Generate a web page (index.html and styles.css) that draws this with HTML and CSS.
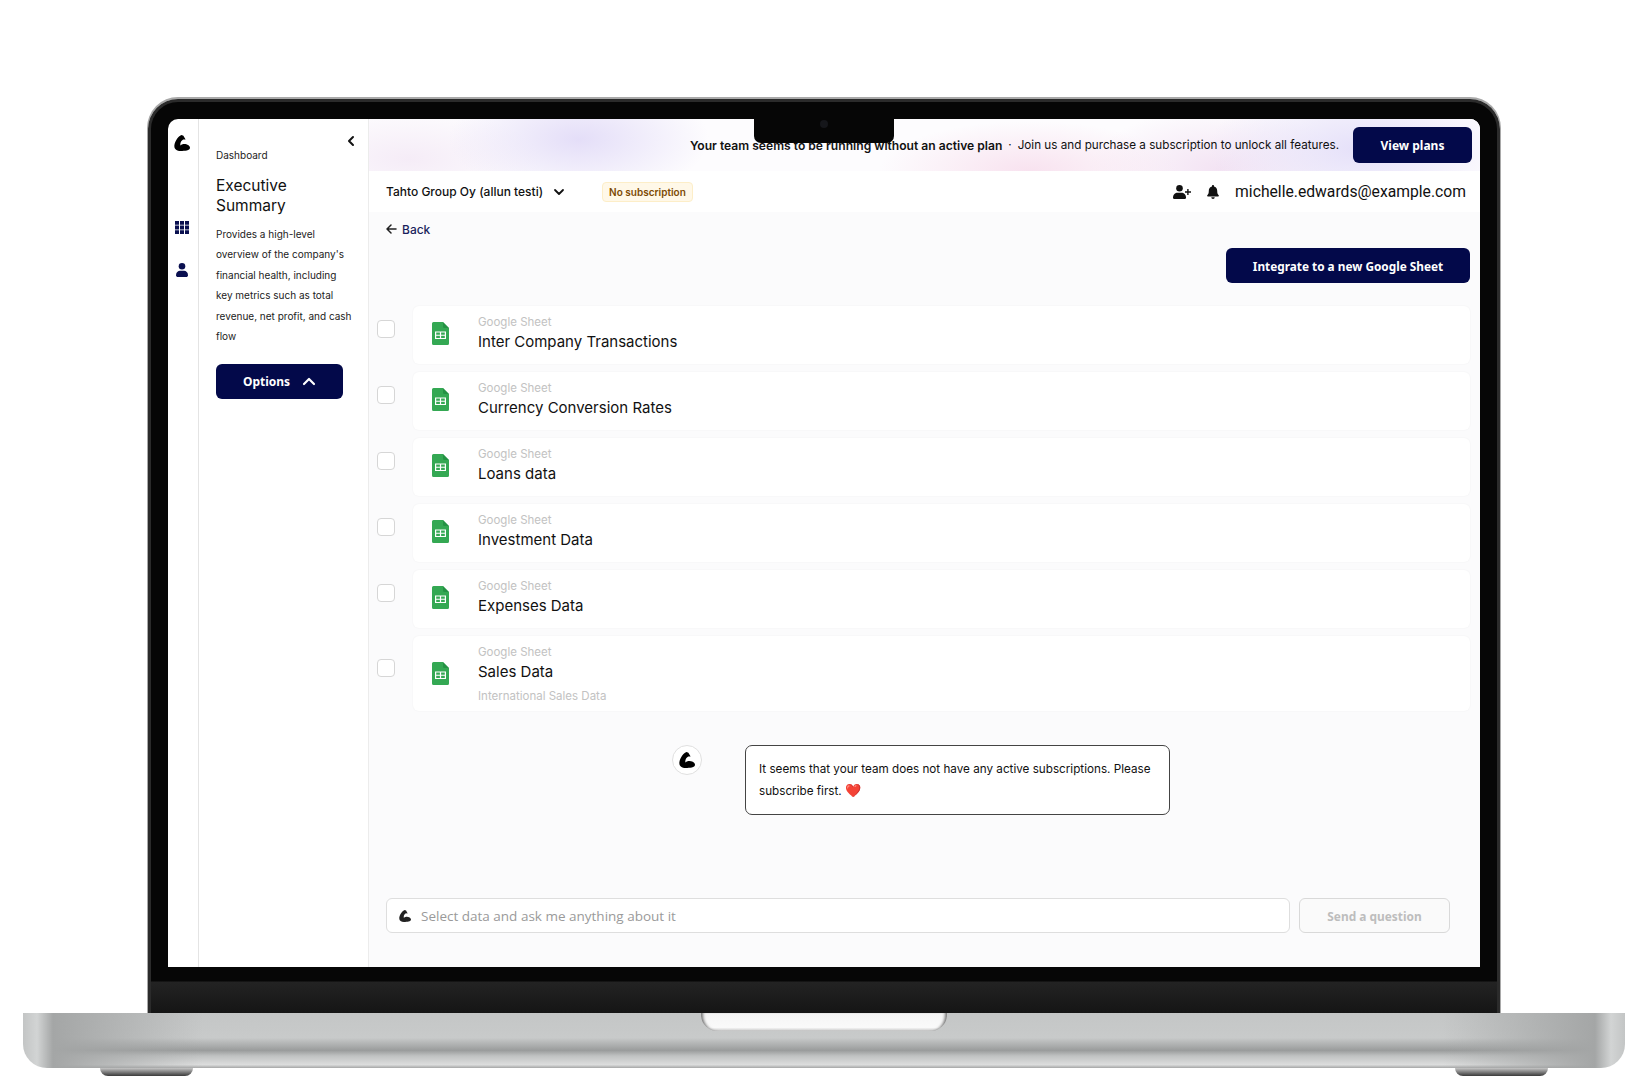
FILE: index.html
```html
<!DOCTYPE html>
<html lang="en">
<head>
    <meta charset="UTF-8">
    <meta name="viewport" content="width=device-width, initial-scale=1.0">
    <title>Executive Summary</title>
    <link rel="stylesheet" href="styles.css">
</head>
<body>
    <svg class="icon-defs" width="0" height="0">
        <symbol id="logo" viewBox="0 0 16 16">
            <path d="M7.6 0C4.6 1 1.4 5.4.5 9.4-.4 13.6 2.400 16 6.600 16c4.200 0 9.400-.4 9.400-3.200 0-2.400-3.400-4.200-6.600-3.800-1.200.2-2.200.8-3 1.400-.4-2.600.6-4.800 2.800-6l2.400.2L9.400.8z"/>
        </symbol>
        <symbol id="sheet" viewBox="0 0 17 23">
            <path fill="#34a853" d="M1.500 0H11l6 6v15.500a1.500 1.500 0 0 1-1.500 1.500h-14A1.500 1.500 0 0 1 0 21.500v-20A1.500 1.500 0 0 1 1.500 0z"/>
            <path fill="#188038" d="M11 0l6 6h-4.500A1.500 1.500 0 0 1 11 4.500z" opacity=".55"/>
            <path fill="#fff" d="M3 9.500h11v7.500H3zm1.200 1.100v2.100h3.700v-2.100zm4.900 0v2.100h3.700v-2.100zm-4.900 3.200v2.100h3.700v-2.100zm4.900 0v2.100h3.700v-2.100z" fill-rule="evenodd"/>
        </symbol>
    </svg>

    <div class="lid">
        <div class="notch"><span class="camera"></span></div>
        <div class="screen">
            <nav class="rail">
                <svg class="rail-logo"><use href="#logo"/></svg>
                <svg class="rail-icon" viewBox="0 0 14 13" fill="#0a1050">
                    <path d="M0 0h4v3.800H0zm5 0h4v3.800H5zm5 0h4v3.800h-4zM0 4.600h4v3.800H0zm5 0h4v3.800H5zm5 0h4v3.800h-4zM0 9.200h4V13H0zm5 0h4V13H5zm5 0h4V13h-4z"/>
                </svg>
                <svg class="rail-icon rail-user" viewBox="0 0 12 14" fill="#0a1050">
                    <circle cx="6" cy="3.300" r="3.300"/>
                    <path d="M0 12.200C0 9.500 2 7.800 4 7.800h4c2 0 4 1.700 4 4.400 0 1.200-.8 1.800-2 1.800H2c-1.200 0-2-.6-2-1.800z"/>
                </svg>
            </nav>

            <aside class="panel">
                <svg class="collapse" viewBox="0 0 8 12" fill="none" stroke="#111" stroke-width="2" stroke-linecap="round" stroke-linejoin="round"><path d="M6 2L2 6l4 4"/></svg>
                <div class="crumb">Dashboard</div>
                <h2>Executive Summary</h2>
                <p>Provides a high-level overview of the company's financial health, including key metrics such as total revenue, net profit, and cash flow</p>
                <button class="btn options-btn">Options
                    <svg viewBox="0 0 14 9" fill="none" stroke="#fff" stroke-width="2.200" stroke-linecap="round" stroke-linejoin="round"><path d="M2 7l5-5 5 5"/></svg>
                </button>
            </aside>

            <main class="main">
                <div class="banner">
                    <b>Your team seems to be running without an active plan</b>
                    <span class="dot">·</span>
                    <span>Join us and purchase a subscription to unlock all features.</span>
                    <button class="btn plans-btn">View plans</button>
                </div>

                <header class="topbar">
                    <span class="team">Tahto Group Oy (allun testi)</span>
                    <svg class="team-caret" viewBox="0 0 12 8" fill="none" stroke="#111" stroke-width="1.800" stroke-linecap="round" stroke-linejoin="round"><path d="M2 2l4 4 4-4"/></svg>
                    <span class="badge">No subscription</span>
                    <svg class="add-user" viewBox="0 0 18 14" fill="#111">
                        <circle cx="6.500" cy="3.300" r="3.300"/>
                        <path d="M0 12.500C0 9.600 2.200 7.800 4.500 7.800h4c2.300 0 4.500 1.800 4.500 4.700 0 1-.7 1.500-1.700 1.500H1.700C.7 14 0 13.500 0 12.500z"/>
                        <path d="M14.200 4h1.400v2.300H18v1.400h-2.400V10h-1.400V7.700H12V6.300h2.200z"/>
                    </svg>
                    <svg class="bell" viewBox="0 0 12 14" fill="#111">
                        <path d="M6 0c.6 0 1 .4 1 1v.6c2 .5 3.200 2.200 3.200 4.200 0 2.600.6 3.600 1.500 4.500.4.500.1 1.200-.6 1.200H.9c-.7 0-1-.7-.6-1.200.9-.9 1.500-1.900 1.500-4.500 0-2 1.200-3.700 3.200-4.200V1c0-.6.4-1 1-1z"/>
                        <path d="M4.300 12.300h3.400C7.700 13.300 7 14 6 14s-1.700-.7-1.700-1.700z"/>
                    </svg>
                    <span class="email">michelle.edwards@example.com</span>
                </header>

                <section class="content">
                    <a class="back">
                        <svg viewBox="0 0 11 10" fill="none" stroke="#222" stroke-width="1.500" stroke-linecap="round" stroke-linejoin="round"><path d="M5 1L1 5l4 4M1 5h9"/></svg>
                        Back
                    </a>
                    <div class="actions">
                        <button class="btn integrate-btn">Integrate to a new Google Sheet</button>
                    </div>

                    <div class="sheet-list">
                        <div class="sheet-row">
                            <span class="check"></span>
                            <div class="sheet-card">
                                <svg class="sheet-icon"><use href="#sheet"/></svg>
                                <div>
                                    <div class="sheet-type">Google Sheet</div>
                                    <div class="sheet-name">Inter Company Transactions</div>
                                </div>
                            </div>
                        </div>
                        <div class="sheet-row">
                            <span class="check"></span>
                            <div class="sheet-card">
                                <svg class="sheet-icon"><use href="#sheet"/></svg>
                                <div>
                                    <div class="sheet-type">Google Sheet</div>
                                    <div class="sheet-name">Currency Conversion Rates</div>
                                </div>
                            </div>
                        </div>
                        <div class="sheet-row">
                            <span class="check"></span>
                            <div class="sheet-card">
                                <svg class="sheet-icon"><use href="#sheet"/></svg>
                                <div>
                                    <div class="sheet-type">Google Sheet</div>
                                    <div class="sheet-name">Loans data</div>
                                </div>
                            </div>
                        </div>
                        <div class="sheet-row">
                            <span class="check"></span>
                            <div class="sheet-card">
                                <svg class="sheet-icon"><use href="#sheet"/></svg>
                                <div>
                                    <div class="sheet-type">Google Sheet</div>
                                    <div class="sheet-name">Investment Data</div>
                                </div>
                            </div>
                        </div>
                        <div class="sheet-row">
                            <span class="check"></span>
                            <div class="sheet-card">
                                <svg class="sheet-icon"><use href="#sheet"/></svg>
                                <div>
                                    <div class="sheet-type">Google Sheet</div>
                                    <div class="sheet-name">Expenses Data</div>
                                </div>
                            </div>
                        </div>
                        <div class="sheet-row">
                            <span class="check"></span>
                            <div class="sheet-card tall">
                                <svg class="sheet-icon"><use href="#sheet"/></svg>
                                <div>
                                    <div class="sheet-type">Google Sheet</div>
                                    <div class="sheet-name">Sales Data</div>
                                    <div class="sheet-type sheet-note">International Sales Data</div>
                                </div>
                            </div>
                        </div>
                    </div>

                    <div class="chat">
                        <span class="avatar"><svg><use href="#logo"/></svg></span>
                        <div class="bubble">It seems that your team does not have any active subscriptions. Please subscribe first. <span class="heart">❤️</span></div>
                    </div>

                    <div class="ask">
                        <div class="ask-input">
                            <svg><use href="#logo"/></svg>
                            <span>Select data and ask me anything about it</span>
                        </div>
                        <button class="send-btn">Send a question</button>
                    </div>
                </section>
            </main>
        </div>
    </div>

    <div class="base">
        <span class="hinge"></span>
    </div>
    <div class="feet">
        <span class="foot"></span>
        <span class="foot"></span>
    </div>
</body>
</html>
```

FILE: styles.css
```css
* {
    box-sizing: border-box;
}

body {
    margin: 0;
    padding-top: 99px;
    background-color: #fff;
    font-family: Inter, "Liberation Sans", sans-serif;
    color: #111;
}

.icon-defs {
    position: absolute;
}

button {
    font-family: inherit;
    cursor: pointer;
}

/* Laptop frame */
.lid {
    position: relative;
    width: 1352px;
    height: 914px;
    margin-left: 148px;
    padding: 17px 17px 0;
    background: linear-gradient(#060606 0, #060606 879px, #232323 880px, #151515 100%);
    border: 3px solid #2b2b2b;
    border-bottom: 0;
    border-radius: 30px 30px 0 0;
    box-shadow: 0 -1px 0 1px #a9a9a9;
}

.notch {
    position: absolute;
    top: 14px;
    left: 603px;
    width: 140px;
    height: 27px;
    display: flex;
    justify-content: center;
    padding-top: 4px;
    background-color: #060606;
    border-radius: 0 0 7px 7px;
}

.camera {
    width: 8px;
    height: 8px;
    border-radius: 50%;
    background-color: #15161a;
}

.screen {
    display: flex;
    width: 1312px;
    height: 848px;
    background-color: #fff;
    border-radius: 10px 10px 0 0;
    overflow: hidden;
}

.base {
    position: relative;
    width: 1602px;
    height: 55px;
    margin-left: 23px;
    border-radius: 0 0 24px 24px;
    background:
        linear-gradient(90deg, #c3c5c5 0, #d2d4d4 14px, #a4a6a6 30px, rgba(170, 172, 172, 0) 180px, rgba(170, 172, 172, 0) 1420px, #a4a6a6 1572px, #d2d4d4 1588px, #c3c5c5 100%),
        linear-gradient(#c4c6c6 0, #c8caca 45%, #9a9c9c 68%, #c0c2c2 78%, #dcdddd 94%, #a5a6a6 100%);
}

.hinge {
    position: absolute;
    top: 0;
    left: 678px;
    width: 246px;
    height: 18px;
    background: linear-gradient(#f4f4f4, #fafafa 80%, #c9c9c9);
    border-radius: 0 0 16px 16px;
    box-shadow: inset 4px 0 3px -2px #777, inset -4px 0 3px -2px #777;
}

.feet {
    display: flex;
    justify-content: space-between;
    width: 1448px;
    margin-left: 100px;
}

.foot {
    width: 93px;
    height: 8px;
    background: linear-gradient(#c5c5c5, #3a3a3a);
    border-radius: 0 0 12px 12px;
}

/* Left rail */
.rail {
    flex: 0 0 31px;
    display: flex;
    flex-direction: column;
    align-items: center;
    padding-top: 16px;
    border-right: 1px solid #e4e4e4;
}

.rail-logo {
    width: 16px;
    height: 16px;
    margin-left: -2px;
}

.rail-icon {
    width: 14px;
    height: 13px;
    margin-top: 70px;
    margin-left: -2px;
}

.rail-user {
    width: 12px;
    height: 14px;
    margin-top: 29px;
}

/* Description panel */
.panel {
    position: relative;
    flex: 0 0 170px;
    padding: 29px 15px 0 17px;
    border-right: 1px solid #ececec;
}

.collapse {
    position: absolute;
    top: 16px;
    left: 148px;
    width: 8px;
    height: 12px;
}

.crumb {
    font-size: 10px;
    line-height: 14px;
    color: #222;
}

.panel h2 {
    margin: 14px 0 0;
    font-size: 15.500px;
    font-weight: 400;
    line-height: 20px;
}

.panel p {
    margin: 8px 0 0;
    font-size: 10px;
    line-height: 20.400px;
    color: #222;
}

.btn {
    background-color: #03094a;
    color: #fff;
    border: none;
    border-radius: 6px;
    font-family: "Noto Sans", sans-serif;
    font-weight: 700;
}

.options-btn {
    display: flex;
    align-items: center;
    justify-content: center;
    gap: 12px;
    width: 127px;
    height: 35px;
    margin-top: 18px;
    font-size: 12px;
}

.options-btn svg {
    width: 14px;
    height: 9px;
}

/* Main column */
.main {
    flex: 1;
    min-width: 0;
    display: flex;
    flex-direction: column;
    background-color: #fbfbfc;
}

.banner {
    flex: 0 0 52px;
    display: flex;
    align-items: center;
    justify-content: flex-end;
    padding-right: 8px;
    font-size: 11.700px;
    background:
        radial-gradient(ellipse 130px 60px at 210px 20px, #e4def8, rgba(228, 222, 248, 0) 100%),
        radial-gradient(ellipse 130px 50px at 40px 40px, #f5ecf7, rgba(245, 236, 247, 0) 100%),
        radial-gradient(ellipse 150px 50px at 660px 52px, #f8e2ef, rgba(248, 226, 239, 0) 100%),
        radial-gradient(ellipse 150px 70px at 990px 30px, #e5e0f9, rgba(229, 224, 249, 0) 100%),
        radial-gradient(ellipse 130px 60px at 850px 50px, #f3e3f3, rgba(243, 227, 243, 0) 100%),
        #fdfcfe;
}

.banner b {
    font-size: 12.100px;
    font-weight: 600;
}

.dot {
    margin: 0 6px;
}

.plans-btn {
    width: 119px;
    height: 36px;
    margin-left: 14px;
    font-size: 12px;
}

.topbar {
    flex: 0 0 41px;
    display: flex;
    align-items: center;
    padding: 0 14px 0 17px;
    background-color: #fff;
}

.team {
    font-size: 12px;
    font-weight: 500;
}

.team-caret {
    width: 12px;
    height: 8px;
    margin-left: 10px;
}

.badge {
    margin-left: 37px;
    padding: 0 6px;
    height: 20px;
    line-height: 18px;
    font-size: 10px;
    font-weight: 600;
    color: #7c4a03;
    background-color: #fff8e8;
    border: 1px solid #fdeec8;
    border-radius: 4px;
}

.add-user {
    width: 18px;
    height: 14px;
    margin-left: auto;
}

.bell {
    width: 12px;
    height: 14px;
    margin: 0 16px 0 16px;
}

.email {
    font-family: Roboto, sans-serif;
    font-size: 15.700px;
}

.content {
    flex: 1;
    display: flex;
    flex-direction: column;
    padding: 9px 10px 34px 8px;
}

.back {
    display: flex;
    align-items: center;
    gap: 5px;
    margin-left: 9px;
    height: 16px;
    font-size: 12px;
    font-weight: 500;
    color: #1a1f5c;
}

.back svg {
    width: 11px;
    height: 10px;
}

.actions {
    display: flex;
    justify-content: flex-end;
    margin-top: 11px;
}

.integrate-btn {
    width: 244px;
    height: 35px;
    font-size: 11.800px;
}

/* Sheet list */
.sheet-list {
    display: flex;
    flex-direction: column;
    gap: 8px;
    margin-top: 23px;
}

.sheet-row {
    display: flex;
    align-items: center;
    gap: 18px;
}

.check {
    flex: 0 0 18px;
    height: 18px;
    margin-bottom: 12px;
    background-color: #fff;
    border: 1px solid #d6d6d6;
    border-radius: 4px;
}

.sheet-card {
    flex: 1;
    display: flex;
    align-items: center;
    gap: 29px;
    height: 58px;
    padding: 0 0 3px 19px;
    background-color: #fff;
    border-radius: 6px;
    box-shadow: 0 0 2px rgba(0, 0, 0, 0.05);
}

.sheet-card.tall {
    height: 75px;
    padding-bottom: 0;
}

.sheet-icon {
    flex: 0 0 17px;
    width: 17px;
    height: 23px;
}

.sheet-type {
    font-size: 11.500px;
    line-height: 14px;
    color: #c2c2c2;
}

.sheet-name {
    margin-top: 3px;
    font-size: 15px;
    line-height: 20px;
}

.sheet-note {
    margin-top: 7px;
}

/* Chat */
.chat {
    display: flex;
    align-items: flex-start;
    margin: 34px 0 0 295px;
}

.avatar {
    flex: 0 0 30px;
    height: 30px;
    display: flex;
    align-items: center;
    justify-content: center;
    background-color: #fff;
    border: 1px solid #e0e0e0;
    border-radius: 50%;
}

.avatar svg {
    width: 16px;
    height: 16px;
}

.bubble {
    width: 425px;
    height: 70px;
    margin-left: 43px;
    padding: 13px 13px;
    font-size: 11.700px;
    line-height: 21px;
    background-color: #fff;
    border: 1px solid #444;
    border-radius: 7px;
}

.heart {
    font-family: "Noto Color Emoji", sans-serif;
    font-size: 13px;
    color: #e8322c;
}

.ask {
    display: flex;
    gap: 9px;
    margin: auto 20px 0 9px;
}

.ask-input {
    flex: 1;
    height: 35px;
    display: flex;
    align-items: center;
    gap: 10px;
    padding-left: 12px;
    background-color: #fff;
    border: 1px solid #dedede;
    border-radius: 6px;
    font-family: "Open Sans", sans-serif;
    font-size: 13.500px;
    color: #9a9a9a;
}

.ask-input svg {
    width: 12px;
    height: 12px;
    fill: #222;
}

.send-btn {
    width: 151px;
    height: 35px;
    background-color: #fafafa;
    border: 1px solid #d9d9d9;
    border-radius: 6px;
    font-family: "Noto Sans", sans-serif;
    font-size: 11.900px;
    font-weight: 700;
    color: #bdbdbd;
}
```
